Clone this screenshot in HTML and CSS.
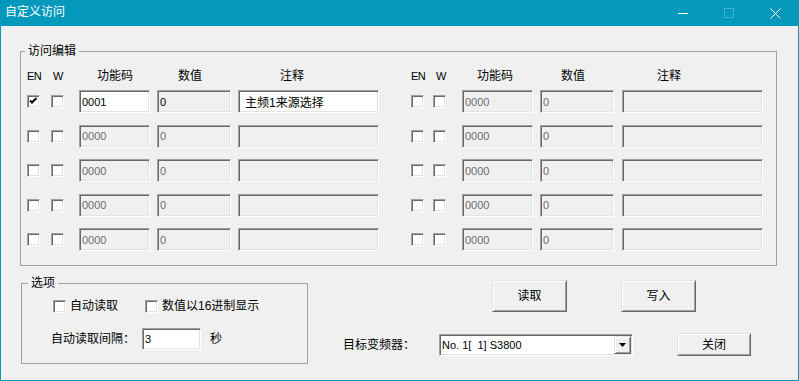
FILE: index.html
```html
<!doctype html>
<html>
<head>
 <meta charset="utf-8">
 <title>自定义访问</title>
 <link rel="stylesheet" href="styles.css">
</head>
<body>

<div class="window">
  <div class="titlebar">
    <span class="title">自定义访问</span>
    <div class="caption">
      <span class="cap"><svg width="10" height="10"><line x1="0" y1="5.5" x2="10" y2="5.5" stroke="#fff"/></svg></span>
      <span class="cap"><svg width="10" height="10"><rect x="0.5" y="0.5" width="9" height="9" fill="none" stroke="#3fb3cf"/></svg></span>
      <span class="cap"><svg width="11" height="11"><path d="M0.5 0.5 L10.5 10.5 M10.5 0.5 L0.5 10.5" stroke="#fff"/></svg></span>
    </div>
  </div>

  <fieldset class="group access">
    <legend>访问编辑</legend>
    <div class="grid head">
      <span class="en">EN</span><span class="w">W</span><span class="h-code">功能码</span><span class="h-val">数值</span><span class="h-note">注释</span>
      <span class="en">EN</span><span class="w w2">W</span><span class="h-code h-code2">功能码</span><span class="h-val">数值</span><span class="h-note h-note2">注释</span>
    </div>
    <div class="grid rows">
      <span class="cb on"><svg width="11" height="11"><polyline points="2,4.5 4,6.5 8.5,2" fill="none" stroke="#000" stroke-width="2"/></svg></span><span class="cb"></span>
      <input class="edit code" value="0001"><input class="edit val readonly" value="0" readonly><input class="edit note" value="主频1来源选择">
      <span class="cb"></span><span class="cb"></span>
      <input class="edit code" value="0000" disabled><input class="edit val" value="0" disabled><input class="edit note" disabled>

      <span class="cb"></span><span class="cb"></span>
      <input class="edit code" value="0000" disabled><input class="edit val" value="0" disabled><input class="edit note" disabled>
      <span class="cb"></span><span class="cb"></span>
      <input class="edit code" value="0000" disabled><input class="edit val" value="0" disabled><input class="edit note" disabled>

      <span class="cb"></span><span class="cb"></span>
      <input class="edit code" value="0000" disabled><input class="edit val" value="0" disabled><input class="edit note" disabled>
      <span class="cb"></span><span class="cb"></span>
      <input class="edit code" value="0000" disabled><input class="edit val" value="0" disabled><input class="edit note" disabled>

      <span class="cb"></span><span class="cb"></span>
      <input class="edit code" value="0000" disabled><input class="edit val" value="0" disabled><input class="edit note" disabled>
      <span class="cb"></span><span class="cb"></span>
      <input class="edit code" value="0000" disabled><input class="edit val" value="0" disabled><input class="edit note" disabled>

      <span class="cb"></span><span class="cb"></span>
      <input class="edit code" value="0000" disabled><input class="edit val" value="0" disabled><input class="edit note" disabled>
      <span class="cb"></span><span class="cb"></span>
      <input class="edit code" value="0000" disabled><input class="edit val" value="0" disabled><input class="edit note" disabled>
    </div>
  </fieldset>

  <div class="bottom">
    <fieldset class="group options">
      <legend>选项</legend>
      <div class="opt-row">
        <span class="cb"></span><span class="opt-label">自动读取</span>
        <span class="cb cb-hex"></span><span class="opt-label">数值以16进制显示</span>
      </div>
      <div class="opt-row interval">
        <span>自动读取间隔：</span>
        <input class="edit secs" value="3">
        <span class="unit">秒</span>
      </div>
    </fieldset>

    <div class="actions">
      <div class="btn-row">
        <button class="btn big">读取</button>
        <button class="btn big">写入</button>
      </div>
      <div class="target-row">
        <span class="target-label">目标变频器：</span>
        <div class="combo">
          <span class="combo-text">No. 1[  1] S3800</span>
          <span class="combo-arrow"><svg width="7" height="4"><path d="M0 0 H7 L3.5 4 Z" fill="#000"/></svg></span>
        </div>
        <button class="btn close">关闭</button>
      </div>
    </div>
  </div>
</div>

</body>
</html>
```

FILE: styles.css
```css
* {
    box-sizing: border-box;
}
body {
    margin: 0;
    background: #f0f0f0;
    font-family: "Liberation Sans", "Noto Sans CJK SC", sans-serif;
    font-size: 12px;
    line-height: 14px;
    color: #000;
}
.window {
    width: 799px;
    height: 381px;
    border: 1px solid #0499bc;
    border-top: 0;
    background: #f0f0f0;
}

/* title bar */
.titlebar {
    height: 26px;
    background: #0499bc;
    display: flex;
    align-items: center;
    color: #fff;
    margin: 0 -1px;
}
.title {
    padding-left: 5px;
    line-height: 25px;
    padding-bottom: 1px;
}
.caption {
    margin-left: auto;
    display: flex;
    padding-right: 1px;
}
.cap {
    width: 46px;
    height: 26px;
    display: flex;
    align-items: center;
    justify-content: center;
}
.cap svg { display: block; }

/* group boxes */
.group {
    border: 1px solid #a0a0a0;
    margin: 0;
    min-width: 0;
}
.group legend {
    padding: 0 3px;
    line-height: 14px;
    font-size: 12px;
}
.access {
    margin: 18px 0 0 19px;
    width: 757px;
    padding: 11px 12px 14px 6px;
}
.access legend {
    margin-left: -2px;
}

.grid {
    display: grid;
    grid-template-columns: 24px 28px 78px 81px 173px 22px 29px 78px 82px 141px;
    align-items: center;
    justify-items: start;
}
.head {
    height: 14px;
    margin-bottom: 7px;
}
.head .en, .head .w {
    font-size: 11px;
    letter-spacing: -0.5px;
}
.head .w { padding-left: 2px; }
.head .w2 { padding-left: 3px; }
.h-code { padding-left: 18px; }
.h-code2 { padding-left: 15px; }
.h-val { padding-left: 21px; }
.h-note { padding-left: 42px; }
.h-note2 { padding-left: 35px; }

.rows {
    row-gap: 11.5px;
}

/* checkbox */
.cb {
    display: block;
    width: 13px;
    height: 13px;
    background: #fff;
    border: 1px solid;
    border-color: #a0a0a0 #fff #fff #a0a0a0;
    box-shadow: inset 1px 1px #696969, inset -1px -1px #e3e3e3;
}
.cb svg { display: block; }

/* edit box */
.edit {
    display: block;
    height: 23px;
    margin: 0;
    padding: 0 2px;
    border: 1px solid;
    border-color: #a0a0a0 #fff #fff #a0a0a0;
    box-shadow: inset 1px 1px #696969, inset -1px -1px #e3e3e3;
    background: #fff;
    font-family: "Liberation Sans", "Noto Sans CJK SC", sans-serif;
    font-size: 11px;
    color: #000;
    outline: none;
}
.edit:disabled {
    background: #f0f0f0;
    color: #6d6d6d;
}
.edit.readonly {
    background: #f0f0f0;
}
.code { width: 71px; }
.val { width: 74px; }
.note {
    width: 141px;
    padding-left: 6px;
    font-size: 12px;
}

/* bottom section */
.bottom {
    display: flex;
}
.options {
    margin: 10px 0 0 20px;
    width: 287px;
    padding: 9px 0 13px 29px;
}
.options legend {
    margin-left: -23px;
}
.opt-row {
    display: flex;
    align-items: center;
    height: 14px;
    padding-left: 2px;
}
.opt-label {
    margin-left: 4px;
}
.cb-hex {
    margin-left: 27px;
}
.interval {
    height: 22px;
    margin-top: 15px;
    padding-left: 0;
}
.secs {
    width: 59px;
    height: 22px;
    margin-left: 7px;
}
.unit {
    margin-left: 9px;
}

.actions {
    display: flex;
    flex-direction: column;
    padding-top: 14px;
}
.btn-row {
    display: flex;
    gap: 54px;
    padding-left: 184px;
}
.btn {
    font-family: "Liberation Sans", "Noto Sans CJK SC", sans-serif;
    font-size: 12px;
    line-height: 14px;
    color: #000;
    background: #f0f0f0;
    padding: 0;
    margin: 0;
    border: 1px solid;
    border-color: #e3e3e3 #696969 #696969 #e3e3e3;
    box-shadow: inset 1px 1px #fff, inset -1px -1px #a0a0a0;
}
.big {
    width: 75px;
    height: 32px;
}
.target-row {
    display: flex;
    align-items: center;
    height: 23px;
    margin-top: 21px;
}
.target-label {
    width: 96px;
    margin-left: 35px;
}
.combo {
    width: 194px;
    height: 22px;
    display: flex;
    align-items: center;
    background: #fff;
    border: 1px solid;
    border-color: #a0a0a0 #fff #fff #a0a0a0;
    box-shadow: inset 1px 1px #696969, inset -1px -1px #e3e3e3;
    padding: 1px;
}
.combo-text {
    flex: 1;
    padding-left: 1px;
    font-size: 11px;
    white-space: pre;
}
.combo-arrow {
    width: 17px;
    height: 18px;
    display: flex;
    align-items: center;
    justify-content: center;
    background: #f0f0f0;
    border: 1px solid;
    border-color: #e3e3e3 #696969 #696969 #e3e3e3;
    box-shadow: inset 1px 1px #fff, inset -1px -1px #a0a0a0;
}
.combo-arrow svg { display: block; }
.close {
    width: 74px;
    height: 23px;
    margin-left: 44px;
}
```
